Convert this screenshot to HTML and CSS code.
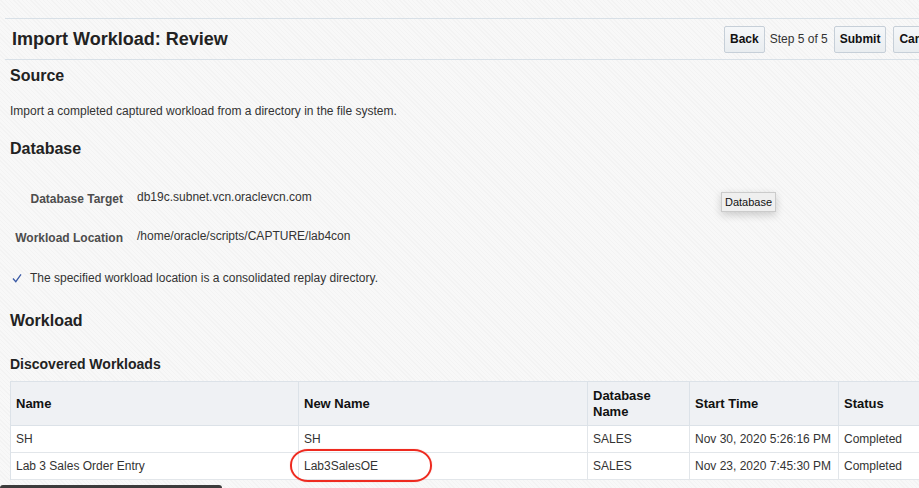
FILE: index.html
```html
<!DOCTYPE html>
<html lang="en">
<head>
<meta charset="utf-8">
<title>Import Workload: Review</title>
<link rel="stylesheet" href="styles.css">
</head>
<body>
<div class="page">
  <div class="header">
    <h1 class="title">Import Workload: Review</h1>
    <div class="actions">
      <button class="btn">Back</button>
      <span class="step">Step 5 of 5</span>
      <button class="btn">Submit</button>
      <button class="btn btn-cancel">Cancel</button>
    </div>
  </div>

  <div class="content">
    <h2 class="section-title first">Source</h2>
    <p class="desc">Import a completed captured workload from a directory in the file system.</p>

    <h2 class="section-title db">Database</h2>
    <div class="fields">
      <div class="field">
        <span class="label">Database Target</span>
        <span class="value">db19c.subnet.vcn.oraclevcn.com</span>
      </div>
      <div class="field">
        <span class="label">Workload Location</span>
        <span class="value">/home/oracle/scripts/CAPTURE/lab4con</span>
      </div>
    </div>
    <div class="confirm">
      <svg class="check" width="10" height="10" viewBox="0 0 10 10"><polyline points="1,5.5 3.8,8.6 9,1.4" fill="none" stroke="#3a5aa6" stroke-width="1.3"/></svg>
      <span>The specified workload location is a consolidated replay directory.</span>
    </div>

    <h2 class="section-title wl">Workload</h2>
    <h3 class="sub-title">Discovered Workloads</h3>

    <table class="grid">
      <colgroup>
        <col class="c-name">
        <col class="c-new">
        <col class="c-db">
        <col class="c-start">
        <col class="c-status">
      </colgroup>
      <thead>
        <tr>
          <th>Name</th>
          <th>New Name</th>
          <th>Database<br>Name</th>
          <th>Start Time</th>
          <th>Status</th>
        </tr>
      </thead>
      <tbody>
        <tr>
          <td>SH</td>
          <td>SH</td>
          <td>SALES</td>
          <td>Nov 30, 2020 5:26:16 PM</td>
          <td>Completed</td>
        </tr>
        <tr>
          <td>Lab 3 Sales Order Entry</td>
          <td class="marked">Lab3SalesOE<span class="ring"></span></td>
          <td>SALES</td>
          <td>Nov 23, 2020 7:45:30 PM</td>
          <td>Completed</td>
        </tr>
      </tbody>
    </table>
  </div>

  <div class="tooltip">Database</div>
  <div class="scroll-thumb"></div>
</div>
</body>
</html>
```

FILE: styles.css
```css
html, body {
  margin: 0;
  padding: 0;
  height: 100%;
  overflow: hidden;
}

body {
  font-family: "Liberation Sans", Arial, Helvetica, sans-serif;
  font-size: 12px;
  color: #333;
  background-color: #f6f6f6;
  background-image: repeating-linear-gradient(45deg, #f3f3f3 0px, #f3f3f3 1px, #f8f8f8 1px, #f8f8f8 3px);
}

.page {
  position: relative;
  height: 488px;
  overflow: hidden;
}

/* header band */
.header {
  margin: 18px 0 0 5px;
  height: 40px;
  border-top: 1px solid #d8e0e7;
  border-bottom: 1px solid #d8e0e7;
  display: flex;
  align-items: center;
  white-space: nowrap;
  overflow: hidden;
}

.title {
  flex: none;
  width: 712px;
  margin: 0;
  padding-left: 7px;
  font-size: 18px;
  line-height: 22px;
  font-weight: bold;
  color: #222;
}

.actions {
  flex: none;
  display: flex;
  align-items: center;
}

.btn {
  font-family: inherit;
  font-size: 12px;
  font-weight: bold;
  color: #111;
  height: 27px;
  padding: 0 5px;
  border: 1px solid #c6cfd8;
  border-radius: 2px;
  background: linear-gradient(#f5f7f9, #e9edf0);
}

.step {
  margin: 0 6px 0 5px;
  color: #333;
  font-size: 12px;
}

.btn-cancel {
  margin-left: 7px;
}

/* content */
.content {
  padding-left: 10px;
}

.section-title {
  margin: 0;
  font-size: 16px;
  line-height: 20px;
  font-weight: bold;
  color: #222;
}

.section-title.first { margin-top: 6px; }
.section-title.db { margin-top: 20px; }
.section-title.wl { margin-top: 25px; }

.desc {
  margin: 17px 0 0;
  line-height: 16px;
}

.fields {
  margin-top: 30px;
  display: flex;
  flex-direction: column;
  gap: 21px;
}

.field {
  display: flex;
  align-items: flex-start;
  gap: 14px;
}

.label {
  width: 113px;
  flex: none;
  text-align: right;
  padding-top: 2px;
  line-height: 16px;
  font-weight: bold;
  color: #4d4d4d;
}

.value {
  line-height: 16px;
  color: #333;
}

.confirm {
  margin-top: 24px;
  display: flex;
  align-items: center;
  line-height: 16px;
}

.check {
  margin: 0 8px 0 2px;
  flex: none;
}

.sub-title {
  margin: 24px 0 0;
  font-size: 14px;
  line-height: 18px;
  font-weight: bold;
  color: #222;
}

/* table */
.grid {
  margin-top: 8px;
  table-layout: fixed;
  width: 930px;
  border-collapse: separate;
  border-spacing: 0;
  border-top: 1px solid #dce2e8;
  border-left: 1px solid #dce2e8;
  background: #fff;
}

.c-name { width: 288px; }
.c-new { width: 289px; }
.c-db { width: 102px; }
.c-start { width: 149px; }
.c-status { width: 102px; }

.grid th,
.grid td {
  box-sizing: border-box;
  padding: 0 5px;
  border-right: 1px solid #e2e6ea;
  border-bottom: 1px solid #e2e6ea;
  text-align: left;
  white-space: nowrap;
}

.grid th {
  height: 44px;
  background: #eff1f4;
  font-size: 13px;
  line-height: 16px;
  font-weight: bold;
  color: #111;
  border-bottom-color: #dce2e8;
  border-right-color: #dce2e8;
}

.grid td {
  height: 27px;
  font-size: 12px;
  color: #333;
}

.grid td.marked {
  position: relative;
}

.ring {
  position: absolute;
  left: -9px;
  top: -4px;
  width: 142px;
  height: 33px;
  box-sizing: border-box;
  border: 2.5px solid #ee2a1f;
  border-radius: 18px / 16px;
  box-shadow: 0 0 1px rgba(238, 42, 31, 0.5);
}

/* overlays */
.tooltip {
  position: absolute;
  left: 721px;
  top: 192px;
  height: 20px;
  box-sizing: border-box;
  padding: 0 3px;
  line-height: 18px;
  font-size: 11px;
  color: #111;
  background: #efefef;
  border: 1px solid #cbcbcb;
  box-shadow: 0 3px 9px rgba(0, 0, 0, 0.18);
}

.scroll-thumb {
  position: absolute;
  left: 0;
  bottom: -3px;
  width: 222px;
  height: 6px;
  border-radius: 3px;
  background: #3c3c3c;
}
```
